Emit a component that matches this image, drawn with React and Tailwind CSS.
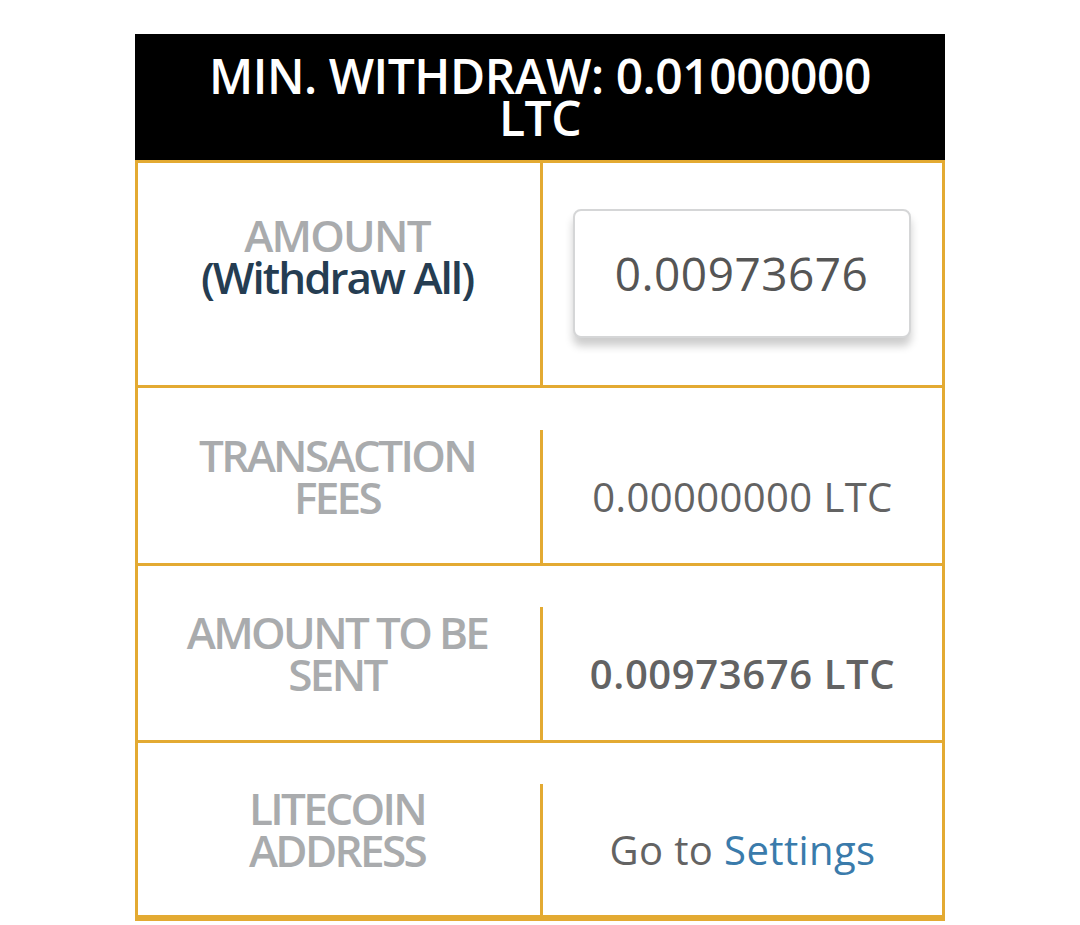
export default function App() {
  const gold = "border-[#e3aa32]";
  const label =
    "font-['Open_Sans',sans-serif] font-semibold text-[44px] leading-[42px] tracking-[-0.06em] text-[#a9abad] text-center";
  const value =
    "font-['Open_Sans',sans-serif] text-[40px] leading-[48px] text-[#636363] text-center";
  return (
    <div className="min-h-screen bg-white flex justify-center pt-[34px] font-['Open_Sans',sans-serif]">
      <div className="w-[810px]">
        <div className="bg-black h-[126px] flex items-center justify-center text-center text-white font-semibold text-[48px] leading-[42px] tracking-[-0.01em]">
          <div>
            MIN. WITHDRAW: 0.01000000
            <br />
            LTC
          </div>
        </div>
        <div className={`border-x-[3px] border-t-[3px] border-b-[6px] ${gold}`}>
          {/* Row 1 */}
          <div className={`grid grid-cols-2 h-[225px] border-b-[3px] ${gold}`}>
            <div className="flex items-center justify-center pb-[36px] pr-[4px]">
              <div className={label}>
                <div className="tracking-[-0.04em]">AMOUNT</div>
                <div className="text-[#253d52] tracking-[-0.045em]">(Withdraw All)</div>
              </div>
            </div>
            <div className={`border-l-[3px] ${gold} flex items-center justify-center pb-[2px]`}>
              <div className="w-[338px] h-[129px] ml-[-2px] rounded-[8px] border-[2px] border-[#d5d6d7] bg-white shadow-[0_8px_9px_rgba(0,0,0,0.2)] flex items-center justify-center">
                <span className="text-[46px] text-[#555555] font-['Open_Sans',sans-serif] tracking-[0.01em]">0.00973676</span>
              </div>
            </div>
          </div>
          {/* Row 2 */}
          <div className={`grid grid-cols-2 h-[178px] border-b-[3px] ${gold}`}>
            <div className="flex items-center justify-center pr-[4px]">
              <div className={label}>
                TRANSACTION
                <br />
                FEES
              </div>
            </div>
            <div className={`mt-[42px] border-l-[3px] ${gold} flex items-center justify-center`}>
              <span className={`${value} tracking-[0.01em]`}>0.00000000 LTC</span>
            </div>
          </div>
          {/* Row 3 */}
          <div className={`grid grid-cols-2 h-[177px] border-b-[3px] ${gold}`}>
            <div className="flex items-center justify-center pr-[4px]">
              <div className={label}>
                AMOUNT TO BE
                <br />
                SENT
              </div>
            </div>
            <div className={`mt-[41px] border-l-[3px] ${gold} flex items-center justify-center`}>
              <span className={`${value} font-semibold tracking-[0.015em]`}>0.00973676 LTC</span>
            </div>
          </div>
          {/* Row 4 */}
          <div className="grid grid-cols-2 h-[172px]">
            <div className="flex items-center justify-center pr-[4px]">
              <div className={label}>
                LITECOIN
                <br />
                ADDRESS
              </div>
            </div>
            <div className={`mt-[41px] border-l-[3px] ${gold} flex items-center justify-center`}>
              <span className={`${value} tracking-[0.01em]`}>
                Go to <span className="text-[#3a7bab]">Settings</span>
              </span>
            </div>
          </div>
        </div>
      </div>
    </div>
  );
}
